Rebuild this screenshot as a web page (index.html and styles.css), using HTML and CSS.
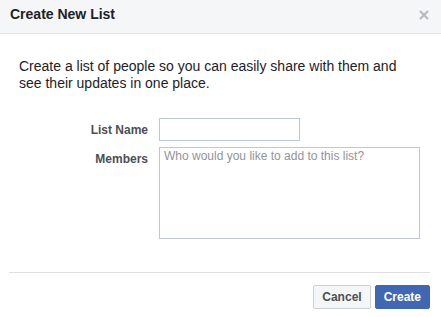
FILE: index.html
```html
<!DOCTYPE html>
<html lang="en">
<head>
    <meta charset="UTF-8">
    <meta name="viewport" content="width=device-width, initial-scale=1.0">
    <title>Create New List</title>
    <link rel="stylesheet" href="styles.css">
</head>
<body>
    <div class="dialog">
        <div class="dialog-header">
            <h2 class="dialog-title">Create New List</h2>
            <a class="dialog-close" href="#" title="Close">
                <svg width="10" height="10" viewBox="0 0 10 10">
                    <path d="M1 1 L9 9 M9 1 L1 9" stroke="currentColor" stroke-width="2"/>
                </svg>
            </a>
        </div>
        <div class="dialog-body">
            <p class="intro">Create a list of people so you can easily share with them and see their updates in one place.</p>
            <div class="form-grid">
                <label class="form-label" for="list-name">List Name</label>
                <input class="text-input" id="list-name" type="text">
                <label class="form-label" for="members">Members</label>
                <textarea class="members-input" id="members" placeholder="Who would you like to add to this list?"></textarea>
            </div>
        </div>
        <div class="dialog-footer">
            <button class="btn btn-cancel">Cancel</button>
            <button class="btn btn-create">Create</button>
        </div>
    </div>
</body>
</html>
```

FILE: styles.css
```css
body {
    margin: 0;
    background-color: #fff;
    font-family: Helvetica, Arial, "Liberation Sans", sans-serif;
    color: #1d2129;
}
.dialog {
    width: 441px;
    height: 317px;
    background-color: #fff;
}
.dialog-header {
    display: flex;
    justify-content: space-between;
    align-items: flex-start;
    padding: 5px 12px 0 10px;
    box-sizing: border-box;
    height: 34px;
    background-color: #f5f6f7;
    border-bottom: 1px solid #e5e5e5;
}
.dialog-title {
    margin: 0;
    font-size: 14px;
    line-height: 19px;
    font-weight: bold;
    color: #1d2129;
}
.dialog-close {
    display: block;
    width: 10px;
    height: 10px;
    margin-top: 5px;
    color: #b4b7bc;
}
.dialog-close svg {
    display: block;
}
.dialog-body {
    padding: 24px 20px 0 19px;
}
.intro {
    margin: 0 0 26px;
    font-size: 14px;
    line-height: 17px;
    color: #1d2129;
}
.form-grid {
    display: grid;
    grid-template-columns: 129px auto;
    column-gap: 11px;
    row-gap: 6px;
    justify-content: start;
}
.form-label {
    padding-top: 4px;
    font-size: 12px;
    line-height: 16px;
    font-weight: bold;
    color: #4b4f56;
    text-align: right;
}
.text-input,
.members-input {
    margin: 0;
    border: 1px solid #bdc7d8;
    border-radius: 0;
    box-sizing: border-box;
    font-family: inherit;
    font-size: 12px;
    color: #1d2129;
    outline: none;
}
.text-input {
    width: 141px;
    height: 23px;
    padding: 0 4px;
}
.members-input {
    display: block;
    width: 261px;
    height: 92px;
    padding: 1px 4px;
    line-height: 14px;
    resize: none;
}
.members-input::placeholder {
    color: #90949c;
}
.dialog-footer {
    display: flex;
    justify-content: flex-end;
    gap: 4px;
    margin: 33px 11px 0 9px;
    padding-top: 12px;
    border-top: 1px solid #dddfe2;
}
.btn {
    height: 24px;
    padding: 0 8px;
    border: 1px solid;
    border-radius: 2px;
    font-family: inherit;
    font-size: 12px;
    font-weight: bold;
    line-height: 22px;
    cursor: pointer;
}
.btn-cancel {
    background-color: #f5f6f7;
    border-color: #ccd0d5;
    color: #4b4f56;
}
.btn-create {
    background-color: #4267b2;
    border-color: #4267b2;
    color: #fff;
}
```
